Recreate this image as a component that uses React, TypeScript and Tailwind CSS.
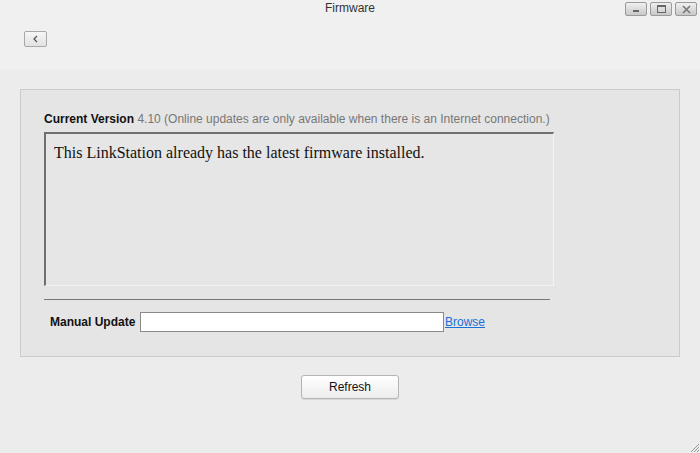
import React from "react";

export default function App() {
  return (
    <div className="w-[700px] h-[453px] bg-[#ececec] font-['Liberation_Sans',Arial,sans-serif] text-[12px] text-[#222] flex flex-col overflow-hidden relative">
      {/* Title bar area */}
      <div className="h-[69px] bg-[#f0f0f0] flex flex-col shrink-0">
        <div className="h-[17px] flex items-start relative">
          <div className="flex-1 text-center text-[12px] text-[#333] leading-[16px]">Firmware</div>
          <div className="absolute right-[3px] top-[2px] flex gap-[3px]">
            <button className="w-[22px] h-[14px] rounded-[2px] border border-[#9a9a9a] bg-gradient-to-b from-[#f0f0f0] to-[#c8c8c8] flex items-end justify-center pb-[3px]">
              <span className="block w-[6px] h-[2px] bg-[#666]" />
            </button>
            <button className="w-[22px] h-[14px] rounded-[2px] border border-[#9a9a9a] bg-gradient-to-b from-[#f0f0f0] to-[#c8c8c8] flex items-center justify-center">
              <span className="block w-[9px] h-[8px] border border-[#666] border-t-2" />
            </button>
            <button className="w-[22px] h-[14px] rounded-[2px] border border-[#9a9a9a] bg-gradient-to-b from-[#f0f0f0] to-[#c8c8c8] flex items-center justify-center">
              <svg width="9" height="9" viewBox="0 0 9 9">
                <path d="M1 1 L8 8 M8 1 L1 8" stroke="#777" strokeWidth="1.6" />
              </svg>
            </button>
          </div>
        </div>
        <div className="pl-[24px] pt-[14px]">
          <button className="w-[23px] h-[16px] rounded-[2px] border border-[#a8a8a8] bg-gradient-to-b from-[#f6f6f6] to-[#e2e2e2] flex items-center justify-center">
            <svg width="7" height="8" viewBox="0 0 7 8">
              <path d="M5 1 L2 4 L5 7" stroke="#555" strokeWidth="1.3" fill="none" />
            </svg>
          </button>
        </div>
      </div>

      {/* Body */}
      <div className="px-[20px] pt-[20px]">
        <div className="h-[268px] bg-[#e5e5e5] border border-[#cbcbcb] pl-[23px] pt-[21px]">
          <div className="text-[12px] leading-[16px]">
            <span className="font-bold text-[#111]">Current Version</span>{" "}
            <span className="text-[#777]">4.10 (Online updates are only available when there is an Internet connection.)</span>
          </div>
          <div className="mt-[5px] w-[510px] h-[154px] border-t-2 border-l-2 border-r border-b border-t-[#6f6f6f] border-l-[#6f6f6f] border-r-[#f2f2f2] border-b-[#f2f2f2] bg-[#e6e6e6] px-[8px] pt-[10px] font-['Liberation_Serif','Times_New_Roman',serif] text-[16px] text-[#111] leading-[18px]">
            This LinkStation already has the latest firmware installed.
          </div>
          <div className="mt-[13px] w-[506px] h-px bg-[#777]" />
          <div className="mt-[12px] flex items-center pl-[6px]">
            <span className="font-bold text-[#111] w-[90px]">Manual Update</span>
            <input className="w-[304px] h-[20px] bg-white border border-[#8a8a8a] outline-none" />
            <a href="#" className="ml-[1px] text-[#1a6fd8] underline">Browse</a>
          </div>
        </div>
        <div className="flex justify-center pt-[18px]">
          <button className="w-[98px] h-[24px] rounded-[3px] border border-[#b5b5b5] bg-gradient-to-b from-[#ffffff] to-[#ececec] text-[12px] text-[#111] shadow-[0_1px_0_#d8d8d8]">
            Refresh
          </button>
        </div>
      </div>

      {/* Resize grip */}
      <svg className="absolute right-0 bottom-0" width="12" height="12" viewBox="0 0 12 12">
        <path d="M11 3 L3 11 M11 6 L6 11 M11 9 L9 11" stroke="#999" strokeWidth="1" />
      </svg>
    </div>
  );
}
